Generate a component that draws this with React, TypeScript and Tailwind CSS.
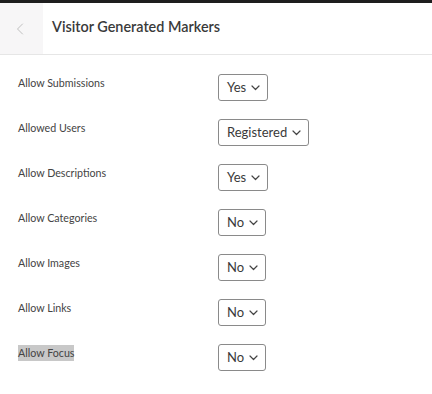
import { ChevronLeft } from 'lucide-react';

const rows = [
  { label: 'Allow Submissions', value: 'Yes' },
  { label: 'Allowed Users', value: 'Registered' },
  { label: 'Allow Descriptions', value: 'Yes' },
  { label: 'Allow Categories', value: 'No' },
  { label: 'Allow Images', value: 'No' },
  { label: 'Allow Links', value: 'No' },
  { label: 'Allow Focus', value: 'No', selected: true },
];

const Caret = () => (
  <svg width="9" height="6" viewBox="0 0 9 6" className="ml-[5px]">
    <path d="M1 1l3.5 3.5L8 1" fill="none" stroke="#444" strokeWidth="1.2" strokeLinecap="round" strokeLinejoin="round" />
  </svg>
);

export default function App() {
  return (
    <div className="w-[432px] h-[394px] bg-white text-[#333] font-['Lato',sans-serif] overflow-hidden">
      <div className="h-[3px] bg-[#1e1e1e]" />

      {/* Header */}
      <div className="flex h-[52px] border-b border-[#e6e6e6]">
        <div className="w-[43px] bg-[#f7f6f7] flex items-center justify-center">
          <ChevronLeft size={20} strokeWidth={1} className="text-[#b4b4b4] -ml-[4px]" />
        </div>
        <h1 className="ml-[9px] self-center text-[14.4px] font-semibold text-[#3a3a3a] leading-none pb-[2px]">
          Visitor Generated Markers
        </h1>
      </div>

      {/* Settings */}
      <div className="pt-[19px] px-[18px]">
        {rows.map((r) => (
          <div key={r.label} className="flex items-start h-[45px]">
            <div className="w-[200px] pt-[1px] leading-[16px]">
              <span
                className={`text-[10.7px] leading-[16px] text-[#444] inline-block align-top ${r.selected ? 'bg-[#c8c8c8]' : ''}`}
              >
                {r.label}
              </span>
            </div>
            <div className="flex items-center h-[27px] pl-[8px] pr-[7px] border border-[#8a8a8a] rounded-[3px] text-[13px] text-[#3a3a3a] leading-none">
              {r.value}
              <Caret />
            </div>
          </div>
        ))}
      </div>
    </div>
  );
}
